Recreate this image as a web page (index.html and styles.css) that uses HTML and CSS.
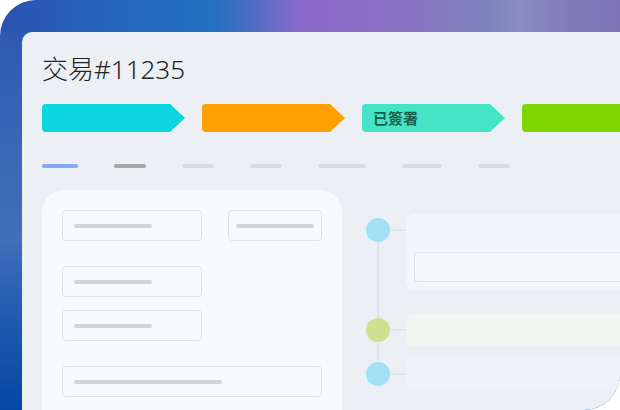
FILE: index.html
```html
<html>
<head>
    <title>交易#11235</title>
    <link rel="stylesheet" href="styles.css">
</head>
<body>
    <div class="frame">
        <div class="panel">
            <h1 class="title">交易#11235</h1>

            <div class="tags">
                <div class="tag tag-cyan"></div>
                <div class="tag tag-orange"></div>
                <div class="tag tag-mint">已簽署</div>
                <div class="tag tag-green"></div>
            </div>

            <div class="tabs">
                <div class="tab tab-active"></div>
                <div class="tab tab-done"></div>
                <div class="tab"></div>
                <div class="tab"></div>
                <div class="tab tab-wide"></div>
                <div class="tab tab-mid"></div>
                <div class="tab"></div>
            </div>

            <div class="content">
                <div class="form-card">
                    <div class="field"><div class="bar"></div></div>
                    <div class="field field-compact"><div class="bar bar-fill"></div></div>
                    <div class="field gap-lg"><div class="bar"></div></div>
                    <div class="field gap-sm row-start"><div class="bar"></div></div>
                    <div class="field gap-lg field-full"><div class="bar bar-long"></div></div>
                </div>

                <div class="timeline">
                    <div class="step">
                        <div class="dot dot-blue"></div>
                        <div class="stub"></div>
                        <div class="step-box step-box-main">
                            <div class="step-input"></div>
                        </div>
                    </div>
                    <div class="step step-far">
                        <div class="dot dot-green"></div>
                        <div class="stub"></div>
                        <div class="step-box step-box-green"></div>
                    </div>
                    <div class="step step-near">
                        <div class="dot dot-blue"></div>
                        <div class="stub"></div>
                        <div class="step-box step-box-plain"></div>
                    </div>
                </div>
            </div>
        </div>
    </div>
</body>
</html>
```

FILE: styles.css
```css
body {
    margin: 0;
    background-color: white;
    font-family: "Noto Sans", "Noto Sans CJK SC", sans-serif;
}

.frame {
    width: 620px;
    height: 410px;
    box-sizing: border-box;
    padding: 32px 0 0 22px;
    border-radius: 36px 0 36px 0;
    overflow: hidden;
    background:
        linear-gradient(to right, #2b52b0 0, #2566be 120px, #2370c0 215px, #5a6cc6 262px, #8b69cb 300px, #8a72c3 400px, #7e84bd 490px, #8a8cc2 520px, #807cba 570px, #7e74b5 620px) top / 100% 32px no-repeat,
        linear-gradient(to bottom, #2a55b2 0, #3a68b6 150px, #4070b8 240px, #3568b8 262px, #1d58ae 330px, #0446a5 410px);
}

.panel {
    height: 100%;
    box-sizing: border-box;
    padding: 21px 0 0 20px;
    background-color: #ecf0f5;
    border-radius: 10px 0 0 0;
    overflow: hidden;
}

.title {
    margin: 0;
    font-size: 26px;
    line-height: 32px;
    font-weight: 300;
    color: #222;
}

/* status chevrons */
.tags {
    display: flex;
    gap: 17px;
    margin-top: 19px;
}

.tag {
    flex: none;
    width: 143px;
    height: 28px;
    box-sizing: border-box;
    padding-left: 11px;
    border-radius: 4px;
    clip-path: polygon(0 0, 128px 0, 143px 14px, 128px 28px, 0 28px);
    font-family: "Noto Sans CJK TC", sans-serif;
    font-size: 15px;
    font-weight: 700;
    line-height: 28px;
    color: #17604c;
}

.tag-cyan { background-color: #0bd5e1; }
.tag-orange { background-color: #ffa000; }
.tag-mint { background-color: #46e4c6; }
.tag-green { background-color: #7ed600; }

/* tab placeholders */
.tabs {
    display: flex;
    gap: 36px;
    margin-top: 32px;
}

.tab {
    width: 32px;
    height: 4px;
    border-radius: 2px;
    background-color: #d9dbde;
}

.tab-active { width: 36px; background-color: #88a9f5; }
.tab-done { background-color: #a6a7a9; }
.tab-wide { width: 48px; }
.tab-mid { width: 40px; }

.content {
    display: flex;
    align-items: flex-start;
    gap: 24px;
    margin-top: 22px;
}

.form-card {
    flex: none;
    width: 300px;
    height: 240px;
    box-sizing: border-box;
    padding: 20px;
    background-color: #f8fafc;
    border-radius: 22px 22px 0 0;
    display: grid;
    grid-template-columns: 140px 1fr;
    column-gap: 26px;
    align-content: start;
}

.field {
    height: 31px;
    box-sizing: border-box;
    padding-left: 11px;
    border: 1px solid #dfe1e4;
    border-radius: 4px;
    background-color: #f9fafc;
    display: flex;
    align-items: center;
}

.field-compact { padding: 0 7px; }
.field-full { grid-column: 1 / 3; }
.row-start { grid-column: 1; }
.gap-lg { margin-top: 25px; }
.gap-sm { margin-top: 13px; }

.bar {
    width: 78px;
    height: 4px;
    border-radius: 2px;
    background-color: #d2d4d7;
}

.bar-fill { flex: 1; }
.bar-long { width: 148px; }

/* timeline */
.timeline {
    flex: none;
    width: 300px;
    margin-top: 24px;
    position: relative;
    display: flex;
    flex-direction: column;
}

.timeline::before {
    content: "";
    position: absolute;
    left: 11px;
    top: 16px;
    bottom: 16px;
    width: 2px;
    background-color: #dfe4e9;
}

.step {
    display: flex;
    align-items: flex-start;
}

.step-far { margin-top: 24px; }
.step-near { margin-top: 12px; }

.dot {
    flex: none;
    width: 24px;
    height: 24px;
    margin-top: 4px;
    border-radius: 50%;
    position: relative;
}

.dot-blue { background-color: #a1e0f6; }
.dot-green { background-color: #cde191; }

.stub {
    flex: none;
    width: 16px;
    height: 2px;
    margin-top: 15px;
    background-color: #dfe4e9;
}

.step-box {
    flex: 1;
    height: 32px;
    border-radius: 8px;
}

.step-box-main {
    height: 76px;
    box-sizing: border-box;
    padding: 38px 0 0 8px;
    background-color: #f2f6fa;
}

.step-box-green { background-color: #f3f6f0; }
.step-box-plain { background-color: #eff3f7; }

.step-input {
    height: 30px;
    box-sizing: border-box;
    border: 1px solid #dde2e7;
    border-right: none;
    border-radius: 4px 0 0 4px;
    background-color: #f4f7fa;
}
```
